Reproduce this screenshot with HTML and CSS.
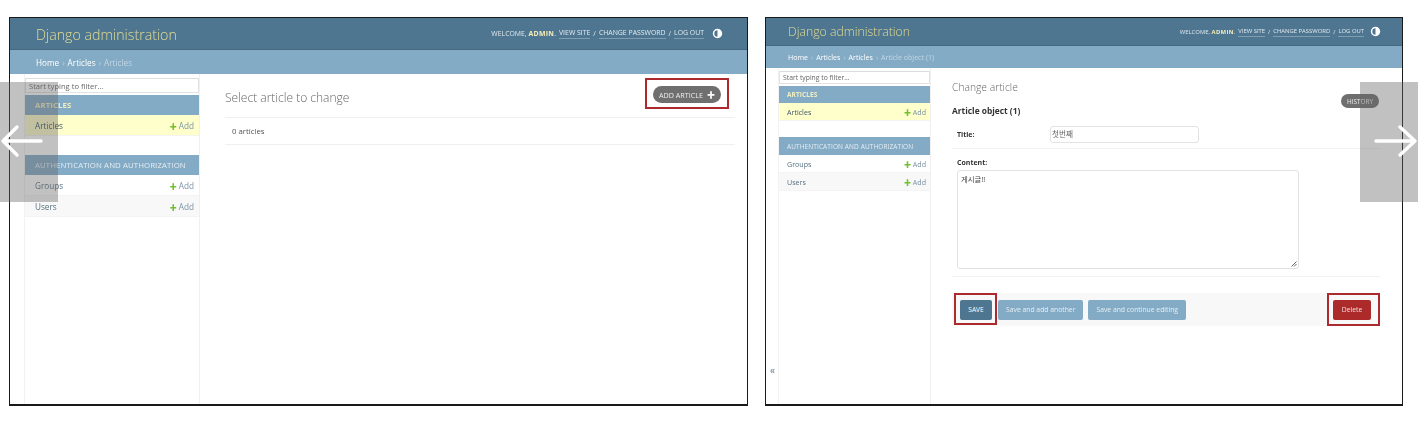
FILE: index.html
```html
<!DOCTYPE html>
<html lang="en">
<head>
<meta charset="utf-8">
<title>Django administration</title>
<link rel="stylesheet" href="styles.css">
</head>
<body>
<div class="stage">
  <section class="frame frame-list">
    <header class="top">
      <span class="brand">Django administration</span>
      <div class="tools">
        <span>Welcome, <strong>admin</strong>.</span>
        <a>View site</a><span>/</span><a>Change password</a><span>/</span><a>Log out</a>
        <svg class="theme" viewBox="0 0 10 10"><circle cx="5" cy="5" r="3.6" fill="none" stroke="#fff" stroke-width="1.4"/><path d="M5 1.4a3.6 3.6 0 0 1 0 7.2z" fill="#fff"/></svg>
      </div>
    </header>
    <nav class="crumbs"><a>Home</a> › <a>Articles</a> › <span>Articles</span></nav>
    <div class="body">
      <aside class="side">
        <div class="filter">Start typing to filter...</div>
        <div class="cap cap-on">Articles</div>
        <div class="row row-on"><a>Articles</a><span class="add"><i>✚</i> Add</span></div>
        <div class="cap cap-gap">Authentication and Authorization</div>
        <div class="row"><a>Groups</a><span class="add"><i>✚</i> Add</span></div>
        <div class="row row-alt"><a>Users</a><span class="add"><i>✚</i> Add</span></div>
      </aside>
      <main class="main">
        <div class="list-head">
          <h1>Select article to change</h1>
          <a class="pill pill-add">Add article <b>✚</b></a>
        </div>
        <p class="count">0 articles</p>
      </main>
    </div>
  </section>

  <section class="frame frame-edit">
    <header class="top">
      <span class="brand">Django administration</span>
      <div class="tools">
        <span>Welcome, <strong>admin</strong>.</span>
        <a>View site</a><span>/</span><a>Change password</a><span>/</span><a>Log out</a>
        <svg class="theme" viewBox="0 0 10 10"><circle cx="5" cy="5" r="3.6" fill="none" stroke="#fff" stroke-width="1.4"/><path d="M5 1.4a3.6 3.6 0 0 1 0 7.2z" fill="#fff"/></svg>
      </div>
    </header>
    <nav class="crumbs"><a>Home</a> › <a>Articles</a> › <a>Articles</a> › <span>Article object (1)</span></nav>
    <div class="body">
      <div class="collapse">«</div>
      <aside class="side">
        <div class="filter">Start typing to filter...</div>
        <div class="cap cap-on">Articles</div>
        <div class="row row-on"><a>Articles</a><span class="add"><i>✚</i> Add</span></div>
        <div class="cap cap-gap">Authentication and Authorization</div>
        <div class="row"><a>Groups</a><span class="add"><i>✚</i> Add</span></div>
        <div class="row row-alt"><a>Users</a><span class="add"><i>✚</i> Add</span></div>
      </aside>
      <main class="main">
        <h1>Change article</h1>
        <div class="obj-head">
          <h2>Article object (1)</h2>
          <a class="pill pill-hist">History</a>
        </div>
        <div class="field field-title">
          <label>Title:</label>
          <div class="input">첫번째</div>
        </div>
        <div class="field field-content">
          <label>Content:</label>
          <div class="textarea">게시글!!
            <svg class="grip" viewBox="0 0 6 6"><path d="M0.5 5.5 5.5 0.5M3 5.5 5.5 3" stroke="#666" fill="none"/></svg>
          </div>
        </div>
        <div class="submit">
          <a class="btn btn-save">Save</a>
          <a class="btn">Save and add another</a>
          <a class="btn">Save and continue editing</a>
          <a class="btn btn-del">Delete</a>
        </div>
      </main>
    </div>
  </section>
</div>

<div class="nav nav-prev"><svg viewBox="0 0 58 120"><path d="M41 59H3M17 45 3 59l14 14" fill="none" stroke="#fff" stroke-width="3.4" stroke-linecap="round" stroke-linejoin="round"/></svg></div>
<div class="nav nav-next"><svg viewBox="0 0 58 120"><path d="M16 59H54M40 45 55 59 40 73" fill="none" stroke="#fff" stroke-width="3.4" stroke-linecap="round" stroke-linejoin="round"/></svg></div>
</body>
</html>
```

FILE: styles.css
```css
* { box-sizing: border-box; }
html, body { margin: 0; height: 426px; overflow: hidden; background: #fff; }
body { font-family: "Open Sans", "Noto Sans CJK KR", sans-serif; color: #333; position: relative; }
a { text-decoration: none; }

.stage { display: flex; gap: 17px; padding: 17px 0 0 9px; }
.frame { height: 389px; border: 1.5px solid #1a1a1a; border-bottom-width: 2px; display: flex; flex-direction: column; overflow: hidden; }
.frame-list { width: 739px; }
.frame-edit { width: 638px; }
.top, .crumbs, .body { filter: blur(.35px); }

.top { display: flex; justify-content: space-between; align-items: center; background: #4f7690; color: #dfe8ee; }
.frame-list .top { height: 32px; padding: 0 24px 0 26px; border-bottom: 1px solid #47697f; }
.frame-edit .top { height: 28px; padding: 0 21px 0 22px; border-bottom: 1px solid #47697f; }
.brand { font-weight: 300; color: #e3dc90; }
.frame-list .brand { font-size: 14.2px; padding-top: 1px; }
.frame-edit .brand { font-size: 12.3px; }
.tools { display: flex; align-items: center; text-transform: uppercase; white-space: nowrap; }
.frame-list .tools { font-size: 6.9px; gap: 3px; }
.frame-edit .tools { font-size: 5.9px; gap: 3px; }
.tools strong { color: #f5edb8; font-weight: 700; letter-spacing: .3px; }
.tools a { color: #e2eaef; border-bottom: 1px solid #7f9db0; line-height: 10px; }
.theme { width: 11px; height: 11px; }
.frame-list .theme { margin-left: 5px; }
.frame-edit .theme { margin-left: 3px; }

.crumbs { background: #84abc5; color: #b8d0df; display: flex; gap: 3px; align-items: center; }
.crumbs a { color: #fff; }
.crumbs span { color: #c2d6e4; }
.frame-list .crumbs { height: 24px; padding-left: 26px; font-size: 8.2px; }
.frame-edit .crumbs { height: 22px; padding-left: 22px; font-size: 7.1px; }

.body { flex: 1; display: flex; min-height: 0; position: relative; }
.side { border-left: 1px solid #f2f2f2; border-right: 1px solid #f0f0f0; flex: none; }
.frame-list .side { width: 176px; margin-left: 14px; padding-top: 4px; }
.frame-edit .side { width: 153px; margin-left: 12px; padding-top: 3px; }

.filter { border: 1px solid #e2e2e2; border-top-color: #ddd; color: #666; display: flex; align-items: center; }
.frame-list .filter { height: 15px; margin-bottom: 2px; padding-left: 3px; font-size: 7.6px; }
.frame-edit .filter { height: 13px; margin-bottom: 2px; padding-left: 3px; font-size: 6.8px; }

.cap { background: #84abc5; color: #e4edf3; text-transform: uppercase; display: flex; align-items: center; letter-spacing: .1px; }
.frame-list .cap { height: 20px; padding-left: 10px; font-size: 7.8px; }
.frame-edit .cap { height: 17px; padding-left: 8px; font-size: 6.5px; }
.cap-on { font-weight: 700; color: #f0edc0; }
.frame-list .cap-gap { margin-top: 19px; }
.frame-edit .cap-gap { margin-top: 16px; height: 18px; }

.row { display: flex; justify-content: space-between; align-items: center; border-bottom: 1px solid #f4f4f4; }
.row a { color: #55707f; }
.frame-list .row { height: 21px; padding: 0 5px 0 10px; font-size: 8.2px; }
.frame-edit .row { height: 18px; padding: 0 4px 0 8px; font-size: 7.1px; }
.row-on { background: #ffffcc; }
.row-on a { color: #3d5566; }
.row-alt { background: #f8f8f8; }
.add { color: #7b93a5; }
.add i { color: #70bf2b; font-style: normal; font-size: 7px; }

.main { flex: 1; min-width: 0; }
.frame-list .main { padding: 0 12px 0 25px; }
.frame-edit .main { padding: 0 22px 0 21px; }
h1 { margin: 0; font-weight: 300; color: #666; }
.list-head { height: 44px; display: flex; justify-content: space-between; align-items: center; border-bottom: 1px solid #f0f0f0; }
.list-head h1 { font-size: 12px; padding-top: 4px; }
.count { margin: 0; height: 27px; display: flex; align-items: center; font-size: 7.8px; padding-left: 7px; color: #555; border-bottom: 1px solid #f0f0f0; }

.pill { display: flex; align-items: center; justify-content: center; background: #6f6f6f; color: #eee; border-radius: 9px; text-transform: uppercase; position: relative; }
.pill-add { width: 68px; height: 17px; font-size: 7.2px; gap: 4px; margin: 0 14px 2px 0; }
.pill-add b { color: #fff; font-size: 8px; }
.pill-add::after { content: ""; position: absolute; inset: -8px -8px -6px -8px; border: 2px solid #ac2a2e; }
.pill-hist { width: 38px; height: 14px; font-size: 6.4px; margin: -1px 1px 0 0; }

.frame-edit h1 { font-size: 10.3px; padding-top: 12px; line-height: 15px; }
.obj-head { display: flex; justify-content: space-between; height: 34px; }
h2 { margin: 0; font-size: 8.4px; font-weight: 700; color: #333; padding-top: 10px; line-height: 12px; }

label { font-size: 7px; font-weight: 700; color: #333; }
.field { border-bottom: 1px solid #f2f2f2; }
.field-title { display: flex; align-items: flex-start; padding-left: 5px; height: 23px; margin-top: -3px; }
.field-title label { width: 93px; padding-top: 4px; }
.input { width: 149px; height: 17px; border: 1px solid #e2e2e2; border-radius: 3px; font-size: 7.6px; color: #666; padding: 1px 0 0 1px; line-height: 13px; }
.field-content { padding-left: 5px; padding-top: 9px; height: 128px; }
.field-content label { display: block; line-height: 9px; margin-bottom: 3px; }
.textarea { width: 342px; height: 99px; border: 1px solid #e2e2e2; border-radius: 3px; font-size: 7.4px; color: #444; padding: 2px 0 0 3px; position: relative; }
.grip { position: absolute; right: 1px; bottom: 1px; width: 6px; height: 6px; }

.submit { margin-top: 16px; height: 33px; background: #f8f8f8; display: flex; align-items: center; gap: 5px; padding: 0 9px 0 8px; }
.btn { height: 20px; padding: 0 8px; background: #84abc5; color: #e6eff5; border-radius: 2px; font-size: 6.8px; display: flex; align-items: center; position: relative; }
.btn-save { width: 32px; padding: 0; justify-content: center; background: #4f7690; color: #fff; text-transform: uppercase; margin-right: 1px; font-size: 6.6px; }
.btn-save::after { content: ""; position: absolute; inset: -7px -5px -5px -6px; border: 2px solid #ac2a2e; }
.btn-del { width: 38px; padding: 0; justify-content: center; margin-left: auto; background: #ac2a2a; color: #f2dede; }
.btn-del::after { content: ""; position: absolute; inset: -7px -9px -6px -6px; border: 2px solid #ac2a2e; }

.collapse { position: absolute; left: 4px; top: 295px; font-size: 10px; color: #557a93; }

.nav { position: absolute; top: 82px; width: 58px; height: 120px; background: rgba(100, 100, 100, .4); }
.nav svg { display: block; width: 58px; height: 120px; }
.nav-prev { left: 0; }
.nav-next { right: 0; }
```
